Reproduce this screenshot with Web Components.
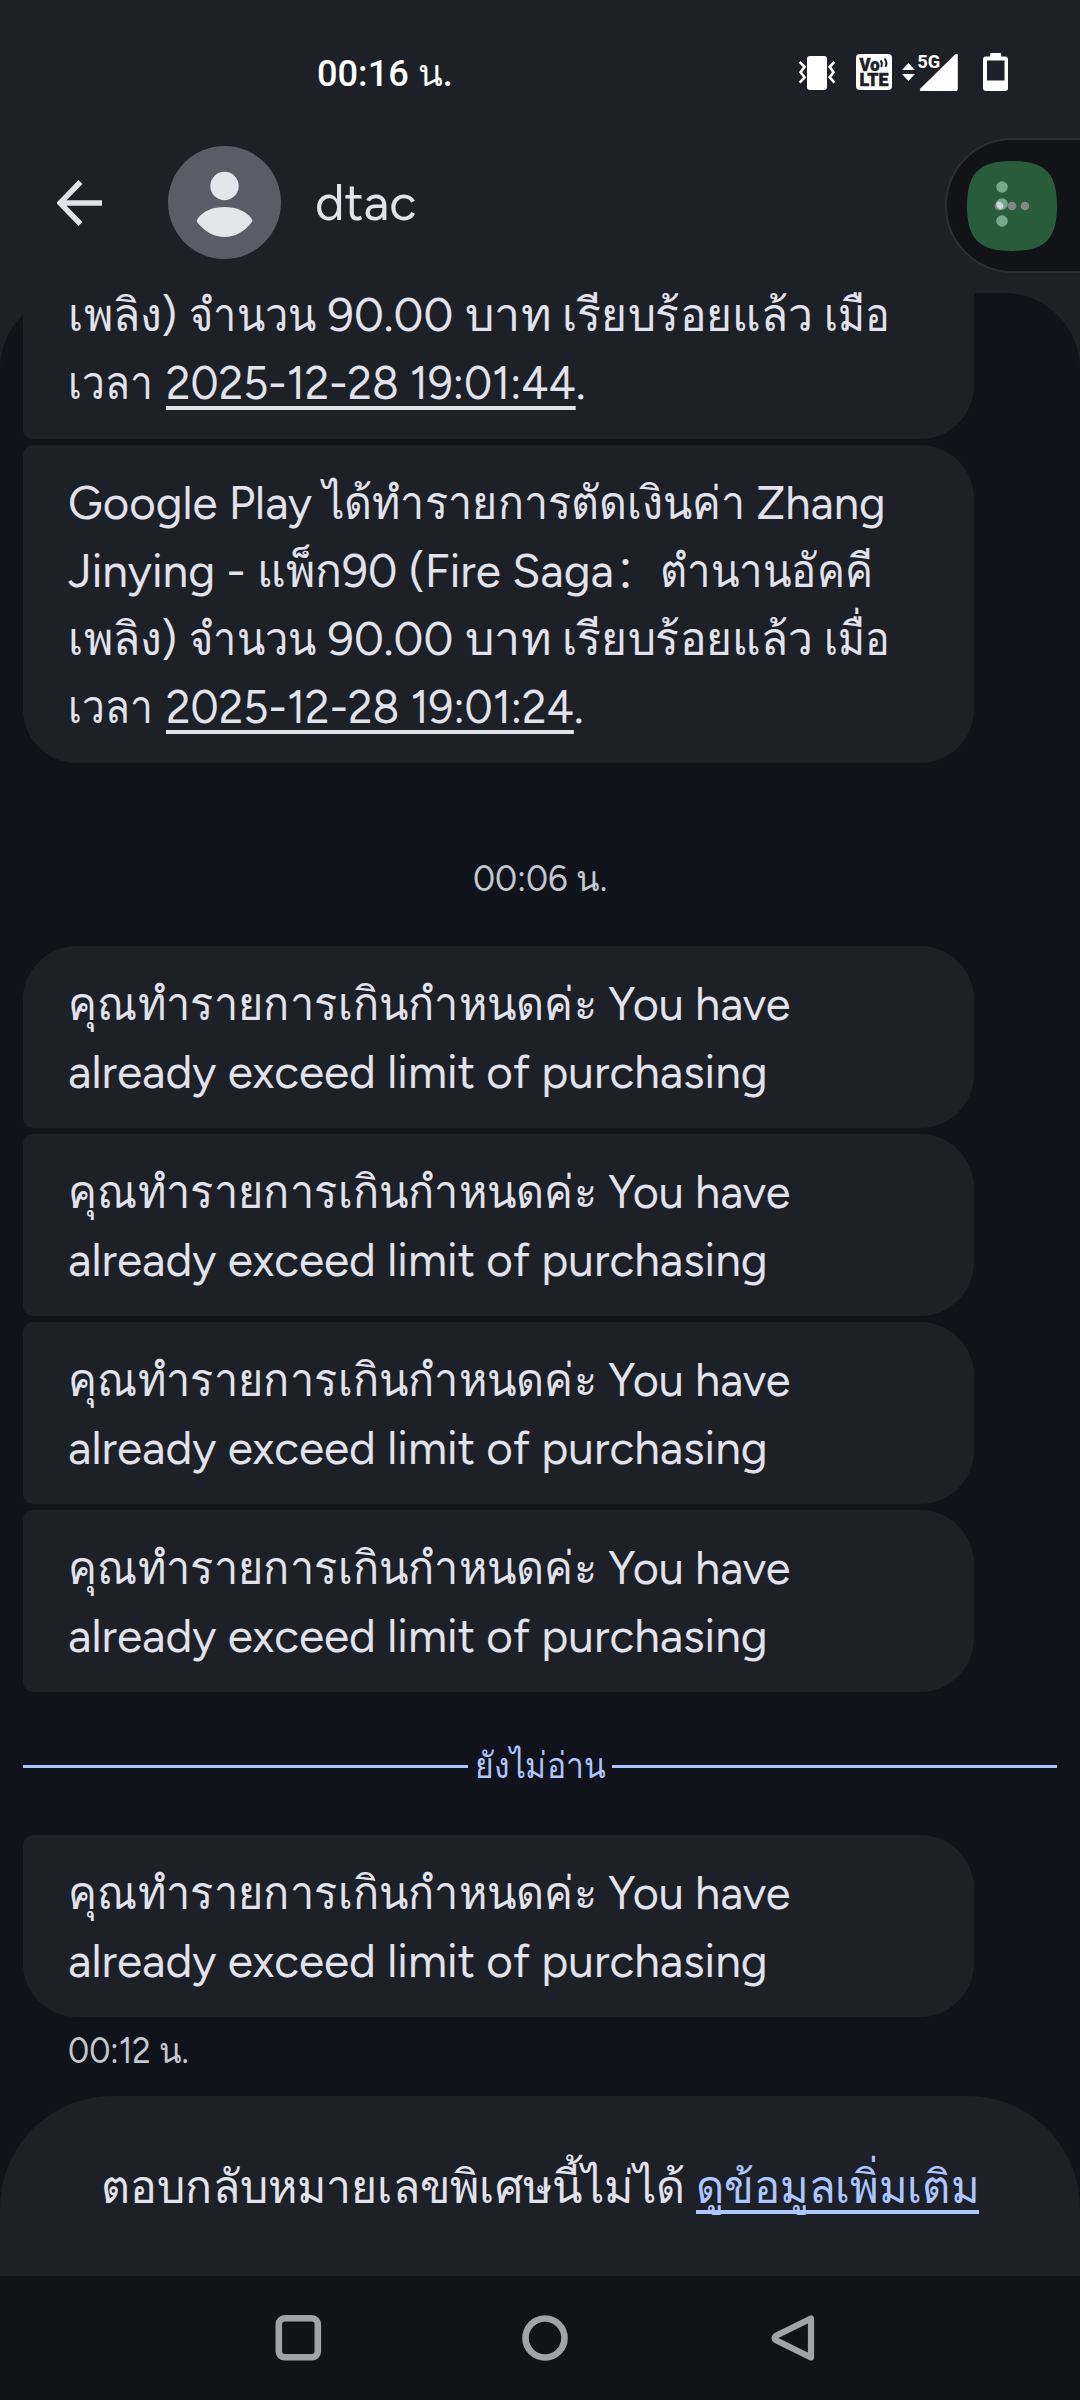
<!DOCTYPE html>
<html lang="th">
<head>
<meta charset="utf-8">
<title>dtac</title>
<style>
html,body{margin:0;padding:0;background:#1e2028}
body{width:1080px;height:2400px;overflow:hidden;font-family:"Google Sans",Figtree,Roboto,"Noto Sans",sans-serif;color:#e1e2ec}
</style>
</head>
<body>
<chat-screen></chat-screen>
<script>
const define = (name, html, ready) => customElements.define(name, class extends HTMLElement {
  constructor() {
    super();
    this.attachShadow({ mode: 'open' }).innerHTML = html;
  }
  connectedCallback() { if (ready) ready(this, this.shadowRoot); }
});

/* A run of text set to an exact advance width */
define('fit-run', `<style>
:host{display:inline-block;white-space:pre}
span{display:inline-block;white-space:pre;transform-origin:0 50%}
:host([link]) span{text-decoration:underline;text-decoration-thickness:4px;text-underline-offset:7px;text-decoration-skip-ink:none}
</style><span><slot></slot></span>`, (host, root) => {
  const w = +host.getAttribute('w'), s = root.querySelector('span');
  if (!w) return;
  const natural = s.offsetWidth;
  host.style.width = w + 'px';
  s.style.transform = `scaleX(${w / natural})`;
});

define('text-line', `<style>
:host{display:block;height:68px;line-height:68px;white-space:nowrap}
</style><slot></slot>`);

define('msg-bubble', `<style>
:host{display:block;box-sizing:border-box;width:951px;flex:none;padding:24px 45px 22px;background:#1e2028;
  border-radius:10px 54px 54px 10px;font-size:46px}
:host([first]){border-top-left-radius:54px}
:host([last]){border-bottom-left-radius:54px}
:host([cut]){border-top-left-radius:0;border-top-right-radius:0;padding-top:0}
</style><slot></slot>`);

define('limit-notice', `<style>:host{display:contents}</style>
<text-line><fit-run w="529">คุณทำรายการเกินกำหนดค่ะ</fit-run><fit-run w="193"> You have</fit-run></text-line>
<text-line><fit-run w="700">already exceed limit of purchasing</fit-run></text-line>`);

define('purchase-tail', `<style>:host{display:contents}</style>
<text-line><fit-run w="93">เพลิง</fit-run><fit-run w="28">) </fit-run><fit-run w="127">จำนวน</fit-run><fit-run w="149"> 90.00 </fit-run><fit-run w="97">บาท </fit-run><fit-run w="262">เรียบร้อยแล้ว </fit-run><fit-run w="66"><slot name="when">เมื่อ</slot></fit-run></text-line>
<text-line><fit-run w="85">เวลา</fit-run><fit-run w="13"> </fit-run><slot></slot><fit-run>.</fit-run></text-line>`);

define('bubble-group', `<style>
:host{display:flex;flex-direction:column;gap:6px;flex:none}
</style><slot></slot>`);

define('time-stamp', `<style>
:host{display:flex;justify-content:center;height:183px;box-sizing:border-box;padding-top:91px;font-size:36px;line-height:50px;color:#c4c6d0;flex:none}
:host([sent]){justify-content:flex-start;height:60px;padding:9px 0 0 45px}
</style><slot></slot>`);

define('unread-divider', `<style>
:host{display:flex;align-items:center;width:1034px;height:143px;flex:none;color:#adc6ff;font-size:36px;line-height:50px}
i{flex:1;height:3px;margin-top:6px;background:#adc6ff}
div{width:144px;display:flex;justify-content:center;padding-top:5px}
</style><i></i><div><slot></slot></div><i></i>`);

define('status-bar', `<style>
:host{display:flex;align-items:flex-start;height:118px;box-sizing:border-box;padding:50px 72px 0 317px;justify-content:space-between;color:#fff}
.t{font:500 37.5px/46px Roboto,"Noto Sans",sans-serif}
.icons{display:flex}
svg{display:block}
</style>
<div class="t"><fit-run w="136">00:16 น.</fit-run></div>
<div class="icons">
<svg width="40" height="44" viewBox="798 50 40 44"><rect x="807" y="56" width="20" height="34" rx="3" fill="#fff"/><path d="M799.6 61.8l5 5-4 5.4 4 5.1-5 5.3M834.400 61.8l-4.700 5 3.800 5.400-3.800 5.100 4.700 5.300" fill="none" stroke="#fff" stroke-width="2.600"/></svg>
<svg width="36" height="44" viewBox="856 50 36 44" style="margin-left:18px"><rect x="856" y="54" width="36" height="36" rx="4" fill="#fff"/>
<text x="859.5" y="70.5" font-family="Roboto" font-weight="900" font-size="17.500" textLength="20" lengthAdjust="spacingAndGlyphs" fill="#1e2028" stroke="#1e2028" stroke-width=".5">Vo</text>
<text x="859.500" y="86" font-family="Roboto" font-weight="900" font-size="17.500" textLength="29" lengthAdjust="spacingAndGlyphs" fill="#1e2028" stroke="#1e2028" stroke-width=".5">LTE</text>
<path d="M880.500 60.500q2.400 2.800.6 6.500M884.600 58.500q3.200 4 .8 8.300" fill="none" stroke="#1e2028" stroke-width="2"/></svg>
<svg width="56" height="44" viewBox="902 50 56 44" style="margin-left:10px"><path d="M902 70l6.400-7 6.600 7zM902 74h13l-6.600 7z" fill="#fff"/><path d="M920.800 91q-1.800-.6-.4-2.400L955 54.400q2.700-1.600 2.800.8V89.200q0 1.800-1.800 1.800z" fill="#fff"/>
<text x="917.200" y="68" font-family="Roboto" font-weight="700" font-size="18.500" textLength="23" lengthAdjust="spacingAndGlyphs" fill="#fff">5G</text></svg>
<svg width="25" height="44" viewBox="983 50 25 44" style="margin-left:25px"><path fill-rule="evenodd" fill="#fff" d="M990 56.500V54.200q0-1.200 1.200-1.200h8.800q1.200 0 1.200 1.200v2.300h3.800q3 0 3 3V88q0 3-3 3h-19q-3 0-3-3V59.500q0-3 3-3zM987 60.500v20h17.500v-20z"/></svg>
</div>`);

define('chat-header', `<style>
:host{display:flex;align-items:center;height:175px;box-sizing:border-box;padding:0 0 6px 57px}
.a{margin-left:66px}
svg{display:block}
b{font-weight:400;font-size:50px;line-height:68px;margin-left:34px}
</style>
<svg width="45" height="46" viewBox="0 0 45 46"><path d="M45 23H4M23.500 2L3 23l20.500 21" fill="none" stroke="#e1e2ec" stroke-width="5.400"/></svg>
<svg class="a" width="113" height="113" viewBox="0 0 113 113"><circle cx="56.500" cy="56.500" r="56.500" fill="#5a5d67"/><circle cx="56.500" cy="40" r="14.200" fill="#e5e6e9"/><path d="M29.500 76.500q-1.500-2 .2-4Q38.500 61 56.500 61t27 11.500q1.500 2 0 4Q72 91 56.500 91T29.500 76.500z" fill="#e5e6e9"/></svg>
<b><fit-run w="102">dtac</fit-run></b>`);

define('edge-widget', `<style>
:host{position:absolute;left:945px;top:138px;display:flex;align-items:center;box-sizing:border-box;width:160px;height:135px;padding-left:20px;
 border:2.500px solid #2c2e32;border-radius:68px 0 0 68px;background:#111316}
svg{display:block}
</style>
<svg width="90" height="90" viewBox="0 0 90 90"><path d="M45 0C78 0 90 12 90 45S78 90 45 90 0 78 0 45 12 0 45 0z" fill="#285c3a"/>
<g fill="#77a88a"><circle cx="35" cy="26" r="5.800"/><circle cx="35" cy="43" r="5.800"/><circle cx="35" cy="60" r="5.800"/></g>
<g fill="#858689"><circle cx="32" cy="45" r="4.300"/><circle cx="45" cy="45" r="4.300"/><circle cx="58" cy="45" r="4.300"/></g>
<clipPath id="c"><circle cx="35" cy="43" r="5.800"/></clipPath><circle cx="32" cy="45" r="4.300" fill="#d0d6d3" clip-path="url(#c)"/></svg>`);

define('message-thread', `<style>
:host{display:flex;flex-direction:column;height:1983px;border-radius:76px 76px 0 0;background:#10131b}
.list{flex:1;min-height:0;display:flex;flex-direction:column;padding-left:23px;margin-top:-12px}
</style><div class="list">
<bubble-group>
<msg-bubble cut><purchase-tail><span slot="when">เมือ</span><fit-run link w="410">2025-12-28 19:01:44</fit-run></purchase-tail></msg-bubble>
<msg-bubble last>
<text-line><fit-run w="255">Google Play </fit-run><fit-run w="422">ได้ทำรายการตัดเงินค่า</fit-run><fit-run w="141"> Zhang</fit-run></text-line>
<text-line><fit-run w="189">Jinying - </fit-run><fit-run w="85">แพ็ก</fit-run><fit-run w="272">90 (Fire Saga</fit-run><fit-run w="46" style="font-family:'Noto Sans CJK SC',sans-serif;font-weight:300;line-height:20px">：</fit-run><fit-run w="213">ตำนานอัคคี</fit-run></text-line>
<purchase-tail><fit-run link w="408">2025-12-28 19:01:24</fit-run></purchase-tail>
</msg-bubble>
</bubble-group>
<time-stamp style="width:1034px"><fit-run w="134">00:06 น.</fit-run></time-stamp>
<bubble-group>
<msg-bubble first><limit-notice></limit-notice></msg-bubble>
<msg-bubble><limit-notice></limit-notice></msg-bubble>
<msg-bubble><limit-notice></limit-notice></msg-bubble>
<msg-bubble><limit-notice></limit-notice></msg-bubble>
</bubble-group>
<unread-divider><fit-run w="131">ยังไม่อ่าน</fit-run></unread-divider>
<msg-bubble last><limit-notice></limit-notice></msg-bubble>
<time-stamp sent><fit-run w="121">00:12 น.</fit-run></time-stamp>
</div><reply-notice></reply-notice>`);

define('reply-notice', `<style>
:host{display:flex;flex:none;height:180px;box-sizing:border-box;padding:57px 0 0 101px;background:#1e2028;border-radius:112px 112px 0 0;font-size:46px}
fit-run[link]{color:#adc6ff}
</style><text-line><fit-run w="584">ตอบกลับหมายเลขพิเศษนี้ไม่ได้</fit-run><fit-run w="11"> </fit-run><fit-run link w="283">ดูข้อมูลเพิ่มเติม</fit-run></text-line>`);

define('nav-bar', `<style>
:host{display:flex;height:124px;box-sizing:border-box;padding:37px 0 0 273px;gap:197px;background:#111316}
svg{display:block}
</style>
<svg width="50" height="50" viewBox="0 0 50 50"><rect x="5.800" y="5.300" width="39" height="39" rx="6" fill="none" stroke="#a2a3a5" stroke-width="6.600"/></svg>
<svg width="50" height="50" viewBox="0 0 50 50"><circle cx="25" cy="25" r="19.500" fill="none" stroke="#a2a3a5" stroke-width="6.600"/></svg>
<svg width="50" height="50" viewBox="0 0 50 50"><path d="M44 5.500v39L9 27.200q-3-2.200 0-4.400z" fill="none" stroke="#a2a3a5" stroke-width="6.200" stroke-linejoin="round"/></svg>`);

define('chat-screen', `<style>
:host{display:flex;flex-direction:column;position:relative;width:1080px;height:2400px;overflow:hidden;background:#1e2028}
</style><status-bar></status-bar><chat-header></chat-header><message-thread></message-thread><nav-bar></nav-bar><edge-widget></edge-widget>`);
</script>
</body>
</html>
